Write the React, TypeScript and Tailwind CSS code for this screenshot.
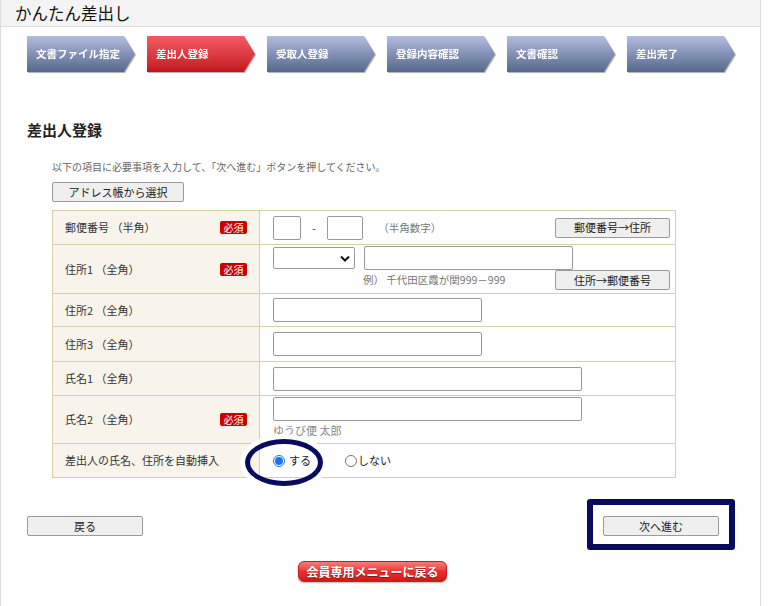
import React from "react";

const steps = [
  { label: "文書ファイル指定", active: false },
  { label: "差出人登録", active: true },
  { label: "受取人登録", active: false },
  { label: "登録内容確認", active: false },
  { label: "文書確認", active: false },
  { label: "差出完了", active: false },
];

function Step({ label, active }: { label: string; active: boolean }) {
  return (
    <div className="[filter:drop-shadow(1px_1px_0_#b5b5b5)]">
      <div
        className={`w-[108px] h-[36px] pl-[9px] flex items-center text-[10.5px] font-bold text-white [clip-path:polygon(0_0,calc(100%-11px)_0,100%_50%,calc(100%-11px)_100%,0_100%)] ${
          active
            ? "bg-gradient-to-b from-[#f45a64] to-[#c4121c]"
            : "bg-gradient-to-b from-[#b4bce0] to-[#55698b]"
        }`}
      >
        {label}
      </div>
    </div>
  );
}

function Required() {
  return (
    <span className="ml-auto w-[27px] h-[13px] bg-[#cc0000] text-white text-[10px] leading-[13px] text-center rounded-[2px]">
      必須
    </span>
  );
}

function TextBox({ w }: { w: string }) {
  return <div className={`${w} h-[24px] bg-white border border-[#9a9a9a] rounded-[2px]`} />;
}

function GrayButton({ label, w }: { label: string; w: string }) {
  return (
    <button
      className={`${w} h-[20px] bg-[#efefef] border border-[#9a9a9a] rounded-[2px] text-[11px] text-[#222] leading-none`}
    >
      {label}
    </button>
  );
}

function Radio({ checked }: { checked: boolean }) {
  return checked ? (
    <span className="w-[12px] h-[12px] rounded-full border border-[#1a73e8] flex items-center justify-center bg-white">
      <span className="w-[8px] h-[8px] rounded-full bg-[#1a73e8]" />
    </span>
  ) : (
    <span className="w-[12px] h-[12px] rounded-full border border-[#777] bg-white" />
  );
}

function Row({
  label,
  required,
  h,
  children,
  last,
}: {
  label: string;
  required?: boolean;
  h: string;
  children: React.ReactNode;
  last?: boolean;
}) {
  return (
    <div className={`flex ${h} ${last ? "" : "border-b border-[#d6cfae]"}`}>
      <div className="w-[207px] shrink-0 bg-[#f8f4ec] border-r border-[#d6cfae] flex items-center pl-[12px] pr-[12px] text-[11px] text-[#333]">
        <span>{label}</span>
        {required && <Required />}
      </div>
      <div className="flex-1 pl-[13px] pr-[5px] bg-white">{children}</div>
    </div>
  );
}

export default function App() {
  return (
    <div className="w-[768px] h-[606px] bg-white overflow-hidden font-['Noto_Sans_CJK_JP','Liberation_Sans',sans-serif] text-[#333]">
      <div className="relative w-[761px] h-[606px] border-l border-r border-[#dcdcdc]">
        {/* header */}
        <div className="h-[27px] bg-[#f4f4f4] border-b border-[#dcdcdc] pl-[14px] text-[16.5px] leading-[26px] text-[#111]">
          かんたん差出し
        </div>

        {/* steps */}
        <div className="flex gap-[12px] pt-[9px] pl-[26px]">
          {steps.map((s) => (
            <Step key={s.label} label={s.label} active={s.active} />
          ))}
        </div>

        <div className="pl-[26px] mt-[48px] text-[15px] leading-[20px] font-bold text-[#222]">差出人登録</div>

        <div className="pl-[51px] mt-[20px] text-[10px] leading-[14px] text-[#666]">
          以下の項目に必要事項を入力して、「次へ進む」ボタンを押してください。
        </div>

        <div className="flex pl-[51px] mt-[8px]">
          <GrayButton label="アドレス帳から選択" w="w-[132px]" />
        </div>

        {/* form table */}
        <div className="ml-[51px] mt-[8px] w-[624px] border border-[#d6cfae]">
          <Row label="郵便番号 （半角）" required h="h-[34px]">
            <div className="flex items-center h-full">
              <div className="w-[28px] h-[24px] border border-[#9a9a9a] rounded-[2px]" />
              <span className="mx-[11px] text-[12px] text-[#555]">-</span>
              <div className="w-[36px] h-[24px] border border-[#9a9a9a] rounded-[2px]" />
              <span className="ml-[15px] text-[10.5px] text-[#777]">（半角数字）</span>
              <div className="flex ml-auto">
                <GrayButton label="郵便番号→住所" w="w-[115px]" />
              </div>
            </div>
          </Row>
          <Row label="住所1 （全角）" required h="h-[49px]">
            <div className="flex flex-col pt-[1px]">
              <div className="flex items-center gap-[9px]">
                <div className="w-[82px] h-[22px] border border-[#9a9a9a] rounded-[2px] flex items-center justify-end pr-[4px]">
                  <svg width="10" height="7" viewBox="0 0 10 7">
                    <path d="M1 1.5 L5 5.5 L9 1.5" fill="none" stroke="#111" strokeWidth="2" />
                  </svg>
                </div>
                <TextBox w="w-[209px]" />
              </div>
              <div className="flex items-center">
                <span className="pl-[90px] text-[10.5px] text-[#777]">例） 千代田区霞が関999－999</span>
                <div className="flex ml-auto">
                  <GrayButton label="住所→郵便番号" w="w-[115px]" />
                </div>
              </div>
            </div>
          </Row>
          <Row label="住所2 （全角）" h="h-[33px]">
            <div className="flex items-center h-full">
              <TextBox w="w-[209px]" />
            </div>
          </Row>
          <Row label="住所3 （全角）" h="h-[35px]">
            <div className="flex items-center h-full">
              <TextBox w="w-[209px]" />
            </div>
          </Row>
          <Row label="氏名1 （全角）" h="h-[34px]">
            <div className="flex items-center h-full">
              <TextBox w="w-[309px]" />
            </div>
          </Row>
          <Row label="氏名2 （全角）" required h="h-[48px]">
            <div className="pt-[1px]">
              <TextBox w="w-[309px]" />
              <div className="text-[11px] leading-[18px] text-[#888]">ゆうび便 太郎</div>
            </div>
          </Row>
          <Row label="差出人の氏名、住所を自動挿入" h="h-[33px]" last>
            <div className="flex items-center h-full text-[11px] text-[#222]">
              <span className="flex items-center gap-[4px]">
                <Radio checked />
                する
              </span>
              <span className="flex items-center gap-[1px] ml-[34px]">
                <Radio checked={false} />
                しない
              </span>
            </div>
          </Row>
        </div>

        {/* bottom buttons */}
        <div className="flex justify-between items-start mt-[21px] pl-[26px] pr-[25px]">
          <div className="flex mt-[17px]">
            <GrayButton label="戻る" w="w-[116px]" />
          </div>
          <div className="flex border-[6px] border-[#0a0a5e] rounded-[3px] pl-[10px] pr-[10px] pt-[11px] pb-[8px] bg-white">
            <GrayButton label="次へ進む" w="w-[116px]" />
          </div>
        </div>

        <div className="flex justify-center mt-[11px] pr-[16px]">
          <button className="w-[149px] h-[21px] rounded-[6px] border border-[#c02020] bg-gradient-to-b from-[#f77a7a] via-[#e83030] to-[#d01818] text-white text-[12px] font-bold leading-none [text-shadow:0_1px_1px_rgba(0,0,0,0.4)] shadow-[0_1px_2px_rgba(0,0,0,0.3)]">
            会員専用メニューに戻る
          </button>
        </div>

        {/* annotation ellipse */}
        <div className="absolute left-[244px] top-[439px] w-[78px] h-[47px] rounded-[50%] border-[5px] border-[#0a0a5e] shadow-[0_0_0_5px_#fff]" />
      </div>
    </div>
  );
}
